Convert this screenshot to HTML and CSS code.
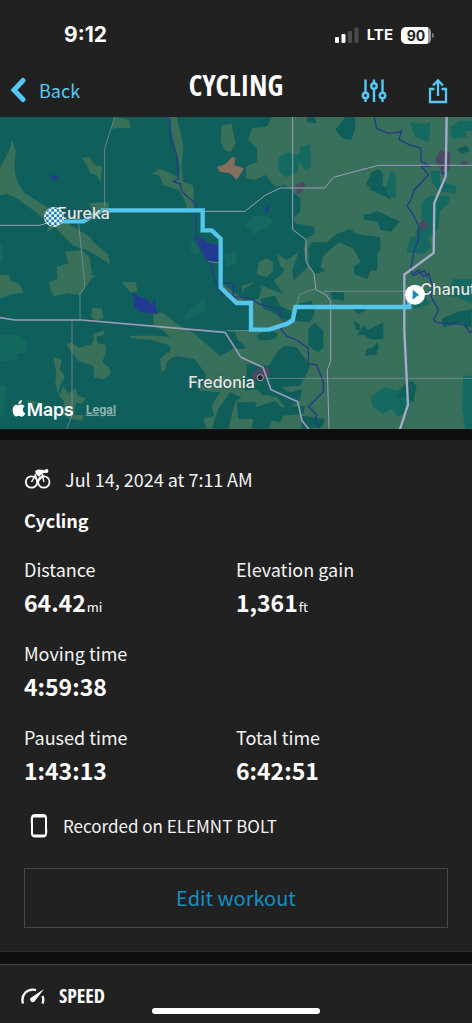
FILE: index.html
```html
<!DOCTYPE html>
<html lang="en">
<head>
<meta charset="utf-8">
<meta name="viewport" content="width=device-width, initial-scale=1">
<title>Cycling</title>
<link rel="stylesheet" href="styles.css">
</head>
<body>
<header class="top">
  <div class="status">
    <span class="clock">9:12</span>
    <div class="signals">
      <svg class="bars" viewBox="0 0 24 16" aria-hidden="true">
        <rect x="0" y="10" width="4" height="6" rx="1.3" fill="#fff"/>
        <rect x="6.500" y="7" width="4" height="9" rx="1.3" fill="#fff"/>
        <rect x="13" y="4" width="4" height="12" rx="1.3" fill="#4b4b4b"/>
        <rect x="19.500" y="0.500" width="4" height="15.500" rx="1.3" fill="#4b4b4b"/>
      </svg>
      <span class="network">LTE</span>
      <span class="battery"><span class="level">90</span></span>
    </div>
  </div>
  <nav class="nav">
    <button class="back" type="button">
      <svg class="chevron" viewBox="0 0 16 26" aria-hidden="true"><path d="M13 3.500 4 13l9 9.500" fill="none" stroke="#56c8f3" stroke-width="5" stroke-linecap="round" stroke-linejoin="miter"/></svg>
      Back
    </button>
    <h1 class="title">CYCLING</h1>
    <div class="actions">
      <button class="action" type="button" aria-label="Adjust">
        <svg class="icon" viewBox="0 0 26 26" fill="none" stroke="#56c8f3" stroke-width="2.400"><path d="M4.500 1.500v13M4.500 20.500v3.500M13 1.500v4M13 11v13M21.500 1.500v13M21.500 20.500v3.500"/><circle cx="4.500" cy="17.500" r="2.700"/><circle cx="13" cy="8" r="2.700"/><circle cx="21.500" cy="17.500" r="2.700"/></svg>
      </button>
      <button class="action" type="button" aria-label="Share">
        <svg class="icon" viewBox="0 0 26 26" fill="none" stroke="#56c8f3" stroke-width="2.300"><path d="M9.500 11H5v13h16V11h-4.500M13 18V2.500M8 7.500l5-5 5 5"/></svg>
      </button>
    </div>
  </nav>
</header>

<main>
<section class="map" aria-label="Route map">
<svg class="chart" viewBox="0 0 1416 936" preserveAspectRatio="xMidYMid slice">
  <defs>
    <pattern id="check" width="16" height="16" patternUnits="userSpaceOnUse" x="130" y="268"><path d="M0 0h8v8H0zM8 8h8v8H8z" fill="#1583b5"/></pattern>
  </defs>
  <rect width="1416" height="936" fill="#0f5f5d"/>

  <!-- western patches -->
  <g fill="#397059" transform="translate(0 -6)">
    <path d="M28 105l9-32 10 35-4 50 4 30 18 35 10 12 35 22 30 18 20 22 10 12 30 12 30 20 40 25 10 15 45 38 5 28-25-15-40-25-45-15-30-30-25-25-25 15 8-25-40-35-55-40-30-15-25 4-20-35-12-25 25-5z"/>
    <path d="M345 6l42 8 5 25-35 0-22 2zM245 130l20-5 20 25 22 5-5 45-12-20-20-5-12-30zM505 6l25 0 20 85-5 60 5 50 30 10 2 75-20 0-10-35-15-25-45-15-15-30-22-5 25-15 35 15 15 10 10-15-5-40-15-55zM665 30l30-4 12 60-15 25-20-5-10-30zM265 265l60-5 5 35-45 5zM195 410l50-5 25 25 5 40-10 35-25 35-35-5-50 10 20-25-5-65 35-10z"/>
    <path fill="#866e5d" d="M652 155l25-8 20-22 10 5-5 20 30 10-22 35-20-20-32-5z"/>
  </g>
  <g fill="#397059" transform="translate(0 459)">
    <path d="M0 15l25 0 12 20 20 5 15 28-35 5-37 12zM175 5l75-5 10 15 25 0-25 28-25 5-15 18-40-5-25 10-8-35 30-12zM365 35l42 2 5 25-20 6zM275 115l30 0 5 30-20 8-15-10zM285 190l30-10-5 15-20 5 2 20 25 5 0 25-10 25 20 18 5 20-22 15-28-5-2-35-45-15-15-20-22-30 15-5 25 15 35-10 10-15-5-15zM160 260l25 10-5 30 15 20-15 25-5 30-9-35 3-30zM190 350l15 20 22-15 5 20 25 10-10 15-20 0-5 35 30 0-5 17-45-7-15-15 5-35-15-20zM80 390l30 5-5 12-20-5z"/>
    <path d="M460 130l30-2 35 30 55 30 80 70 30-15 30 0 0 110-70-15-40-35-25-35-55-10-15 5-15 15-5 20-10 10-5-40 20-20 35-5-20-15-60-18-60-5-5-8 80 0 40 5-20-20-30-15z"/>
  </g>
  <g fill="#14695f">
    <path d="M0 370l10 20 0 40-10 5zM0 655l45-3 35 15-2 40-25 2-5 20-48 5zM0 805l18 5-8 90-10 0zM555 600l20-30 42-25 0 35-40 20-20 10zM570 385l20-12 12 30-12 10-18-8z"/>
  </g>

  <!-- eastern grassland -->
  <g transform="translate(510 216)">
    <path fill="#39705b" d="M306-216L291-187 246-182 234-147 261-122V-82L228-67V-32L256-27 286-42 316-7 346-12 391 28V68L371 88 376 103 431 113 436 133 411 148 400 180 412 235 370 275 368 240 385 190 350 213 320 195 330 230 345 243 325 265 312 275 340 315 300 300 250 280 215 290 220 330 160 285 150 300 165 320 200 345 250 348 245 420 170 430 225 470 225 480 190 478 150 510 120 500 90 460 20 458 0 470 0 490 60 500 105 535 110 600 60 560 80 590 90 605 150 610 125 650 132 680 100 690 110 720H906V-216z"/>
    <path fill="#39705b" d="M265 220l25-12 20 12 0 25-20 20-30-10z"/>
    <g fill="#0f5e5a">
      <path d="M220 300l45-25 10 25-10 30-45 5zM270 330l45-10 15 30 50 25-30 20-50-30-20-5zM260 440l35-20 30 15-10 15-45 5zM150 430l45 0 10 30-25 15-25-15zM385 345l40-10 10 35-15 30-45-5z"/>
      <path d="M415 180l10-20 45 0 30-25 40-15 20 15 70 10 2 35-10 15 0 50-20 0-10 25-40-15 0-25 20-10-20-40-45-20-30 25-20 20-5 30 15 10-30 10-20-25z"/>
      <path d="M230 540l0-15 65 5 30-45 20-15 35 5 40 55-5 15-25 45-60 5-20 15-30 10-20-20-35 5-10-35 15-10zM415 420l20-20 25 25 0 50-15 15-30-20zM482 310l40 0 0 25-35-5zM545 358l20-5 25 10-25 12zM550 395l20 10 0 20-12-3zM560 440l20-30 15 12 45-22 0 50-35 2-25-15zM585 500l5-20 20-5 12-15 5 15-8 22zM595 0l40-10 30 10-2 30-35-15zM580 75l20 0 20-10 70 33-28 30-30-5-10-25-40-5z"/>
      <path d="M200 640l60 0-5 15 60-20 20 20 70-5-5 25-60 5-10 20-25-5-10 25-50 0 5-30-45 0zM90 640l25 0-5 45-22-5zM180 610l35 15-20 15-20 80-50 0 20-60zM280 570l45 20 35 20 35-10-5 35-40 25-30-35-40-10zM395 680l70 10-10 25-60 5z"/>
      <path d="M526-216l30 0 0 35-14 35-26-7-20-25zM588-15l18-35 20-10 14 15-4 50-18 5zM410-216l25 0 5 20-30-5z"/>
    </g>
    <g fill="#146a60">
      <path d="M390-125l30-10 4 65-15 15-25-30zM648-5l15-50 15 10 0 70-25-5zM720-200l45 5 15-5 0 30-5 28-40-15zM325-95l25-15 40 10-8 50-35 15-22-20zM755 40l25-20 60 0-5 25-25 20-5 55-35 30-25 10-10-30 20-30zM780-55l30 0 0 35 50 10-5 25-50-10-20-25zM720 145l50-10 15 40-25 20-50-5zM710 320l45-10 25 35-45 15zM225 110l25-30 40 0 20 15-20 20-40 20zM60 160l30-15 5 35-20 15zM160 195l40-5 0 30-30 15zM840-185l30-20 36 0 0 30-20 0 5 20-45 5zM850 270l55 0 0 75-40-20-35-5zM880 560l26 0 0 160-20 0-10-60z"/>
      <path d="M602 625l40-30 40 10 40-30 15 15-25 80-30 15-15-25-30 15-30-25z"/>
    </g>
    <path fill="#0f5e5a" d="M815 390l45-20 45-10 0 55-20 0-5-15-60 15zM700 590l25-15 15 15-10 50-30-20-20 10zM860-120l30-10 10 15-25 10z"/>
    <path fill="#4b4a63" d="M376-12l22-10 8 10-8 20-18 8zM795-90l15-25 30 5 0 50-25 10zM750 100l10-8 15 15-5 15-18 0zM245 555l15-15 35-5 5 20-25 20-25-3zM870-80l20-5 4 10-14 5z"/>
    <path fill="#223b91" d="M283 60l12-15 4 8-8 17zM812-50l15 0 0 8-12-3zM80 148l20 0 10 12 40 10-4 50-35-5-15-25z"/>
  </g>
  <path fill="#223b91" d="M145 172l15 5 15-2-10 18zM395 525l15 12 30 10 15 15 10-20 0 25 8 25-30-5-25-2-18-20 5-10z"/>

  <!-- rivers -->
  <g fill="none" stroke="#263b86" stroke-width="4">
    <path d="M510 0l2 70 18 45 5 70-15 10 20 5 7 25 40 35 0 75 3 15-5 20 15 20 30 40 15 60 25 50M700 500v30"/>
    <g transform="translate(510 216)"><path d="M160 283h30v40l50 5 30 18 60 15 0-5 0 28 20 20-18 15 18 22 30 12 35 25 0 45 25 5 20 50 0 30-45 45 25 25-5 15 15 25"/></g>
    <g transform="translate(696 -6)"><path d="M426 6l8 34 35 15 35-4 5-5-8 28 30 15 35 10 2 40 25 15-25 0 22 25-43 45-10 30-12 18 20 30 15 30 0 40-15 40-8 45 5 25 35-15 10 20"/></g>
    <g transform="translate(696 459)"><path d="M545 10l15-10 15 20 15-10 12 40-5 30 23 40-15 30 10 8 80 5 20 25 15-15 0 30"/></g>
  </g>

  <!-- roads -->
  <g fill="none" stroke="#8897a0" stroke-width="2">
    <path d="M344 0l-30 95V270M236 320l18 180-1 12-13 18v76M216 611v285l-16 40M624 433l34 5M680 641l76 0M798 784h618M970 523h243M889 570l10-38 50-18"/>
  </g>
  <g fill="none" stroke="#9a9cbd" stroke-width="3">
    <path d="M0 325h120l30-10M600 283h135l60-48 46-22h133l26-32 135-36h281"/>
    <path d="M878 0v338l40 30v66l24 36 6 48 32 17 12 18v180l-10 25 5 178"/>
    <path stroke-width="5" d="M0 602l45 7h200l230 20 200 17 48 75 66 30 24 67 80 36 13 57 20 25"/>
    <path stroke="#a5adcc" stroke-width="7" d="M1340 0l-3 178-34 80-2 150-88 65v170l11 220-24 74"/>
  </g>

  <circle cx="781" cy="782" r="9" fill="#161b21" stroke="#a5a9b3" stroke-width="3"/>
  <path fill="none" stroke="#54c6eb" stroke-width="13" stroke-linejoin="miter" d="M165 313h85l55-33h303v60h27l27 25v147l48 46h43v80h54l55-18 16-10 8-40h342v-36"/>
  <g class="place">
    <text x="172" y="306">Eureka</text>
    <text x="565" y="813">Fredonia</text>
    <text x="1261" y="535">Chanute</text>
  </g>
  <circle cx="162" cy="300" r="30" fill="#fff"/>
  <circle cx="162" cy="300" r="29" fill="url(#check)"/>
  <circle cx="1245" cy="533" r="30" fill="#fff"/>
  <path d="M1238 518l19 15-19 15z" fill="#168bc0"/>
  <path fill="#fff" d="M56 865c6-4 14-4 18 3-8 5-7 17 2 21-4 9-9 12-15 9-4-2-6-2-10 0-7 3-13-7-13-18 0-14 10-20 18-15zM55 862c0-8 4-12 11-13 0 8-4 12-11 13z"/>
  <text class="brand" x="80" y="896">Maps</text>
  <a href="#legal"><text class="legal" x="258" y="890">Legal</text></a>
</svg>
</section>

<section class="summary">
  <div class="date">
    <svg class="bike" viewBox="0 0 28 20" aria-hidden="true" fill="none" stroke="#fff" stroke-width="1.800"><circle cx="7.500" cy="13" r="5.700"/><circle cx="19.800" cy="13" r="5.700"/><path d="M7.500 13l4-7M11 5l2.500 8 6-7M18 5l2 8" stroke-width="1.500"/><path d="M11 2l3-1.500 6 .5 3 2.500-5 1-3 3.500-3-3z" fill="#fff" stroke="none"/><circle cx="22.500" cy="2" r="1.900" fill="#fff" stroke="none"/></svg>
    <time datetime="2024-07-14T07:11">Jul 14, 2024 at 7:11&#8201;AM</time>
  </div>
  <h2 class="name">Cycling</h2>
  <dl class="stats">
    <div class="stat"><dt>Distance</dt><dd>64.42<small>mi</small></dd></div>
    <div class="stat"><dt>Elevation gain</dt><dd>1,361<small>ft</small></dd></div>
    <div class="stat wide"><dt>Moving time</dt><dd>4:59:38</dd></div>
    <div class="stat"><dt>Paused time</dt><dd>1:43:13</dd></div>
    <div class="stat"><dt>Total time</dt><dd>6:42:51</dd></div>
  </dl>
  <div class="device">
    <svg class="unit" viewBox="0 0 18 26" aria-hidden="true" fill="none" stroke="#fff"><rect x="2" y="2" width="14" height="21.500" rx="3" stroke-width="2"/><path d="M3 3.500h12M3 22.500h12" stroke-width="2"/><path d="M1.500 5v5M16.500 16v4" stroke-width="1.500"/></svg>
    Recorded on ELEMNT BOLT
  </div>
  <button class="edit" type="button">Edit workout</button>
</section>

<section class="speed">
  <svg class="gauge" viewBox="0 0 24 18" aria-hidden="true"><path d="M2 16.500C-.5 8 6 1 15 3" fill="none" stroke="#fff" stroke-width="2.300"/><path d="M21.500 9q1.500 4 0 7.500" fill="none" stroke="#fff" stroke-width="2.300"/><path d="M23 2L13.500 14.500a2.700 2.700 0 0 1-4-3.500z" fill="#fff"/></svg>
  <h2 class="heading">SPEED</h2>
</section>
</main>
<div class="home"></div>
</body>
</html>
```
FILE: styles.css
```css
* { box-sizing: border-box; }

body {
  margin: 0;
  min-height: 100vh;
  position: relative;
  background: #212121;
  color: #f4f4f4;
  font-family: "Noto Sans CJK SC", "Noto Sans", sans-serif;
  font-size: 18px;
  line-height: 28px;
}

h1, h2, dl, dd { margin: 0; }

button {
  border: 0;
  padding: 0;
  background: none;
  font: inherit;
  cursor: pointer;
}

svg { display: block; }

.status {
  display: flex;
  justify-content: space-between;
  align-items: center;
  height: 70px;
  padding: 0 38px 0 64px;
  font-family: Inter, "Liberation Sans", sans-serif;
  color: #fff;
}

.clock { font-size: 21px; font-weight: 700; }

.signals { display: flex; align-items: center; gap: 8px; }
.bars { width: 24px; height: 16px; }
.network { font-size: 15px; font-weight: 700; }

.battery { display: flex; align-items: center; }
.battery::after {
  content: "";
  width: 2px;
  height: 5px;
  margin-left: 1px;
  border-radius: 0 2px 2px 0;
  background: #777;
}
.level {
  width: 30px;
  border-radius: 5px;
  background: linear-gradient(90deg, #fff 90%, #999 90%);
  color: #212121;
  font-size: 14px;
  font-weight: 700;
  line-height: 17px;
  text-align: center;
}

.nav {
  display: grid;
  grid-template-columns: 1fr auto 1fr;
  align-items: start;
  height: 47px;
  padding: 0 10px;
}

.back {
  display: flex;
  align-items: center;
  gap: 13px;
  padding-top: 6px;
  color: #56c8f3;
  font-size: 18px;
  line-height: 28px;
}
.chevron { width: 16px; height: 26px; }

.title {
  font-family: "Liberation Sans Narrow", "Open Sans Condensed", "Roboto Condensed", "DejaVu Sans Condensed", sans-serif;
  font-size: 29px;
  font-weight: 700;
  line-height: 30px;
  color: #fff;
}

.actions { display: flex; justify-content: flex-end; gap: 38px; padding: 8px 11px 0 0; }
.icon { width: 26px; height: 26px; }

.map { border-bottom: 11px solid #0e0e0e; }
.chart { width: 100%; height: auto; }

.place {
  fill: #e1e9e9;
  stroke: #31524f;
  stroke-width: 3px;
  paint-order: stroke;
  font-family: Inter, "Liberation Sans", sans-serif;
  font-size: 48px;
  font-weight: 500;
}
.brand {
  fill: #fff;
  font-family: Inter, "Liberation Sans", sans-serif;
  font-size: 53px;
  font-weight: 600;
}
.legal {
  fill: #91b5b1;
  font-family: Inter, "Liberation Sans", sans-serif;
  font-size: 34px;
  font-weight: 700;
  text-decoration: underline;
}

.summary {
  padding: 25px 24px 23px;
  border-bottom: 1px solid #2c2c2c;
}

.date { display: flex; align-items: center; gap: 13px; }
.bike { width: 28px; height: 20px; }

.name {
  margin: 13px 0 20px;
  font-size: 18px;
  font-weight: 700;
  line-height: 28px;
  color: #fff;
}

.stats {
  display: grid;
  grid-template-columns: 1fr 1fr;
  row-gap: 18px;
}
.wide { grid-column: 1 / -1; }
.stat dt { line-height: 30px; }
.stat dd {
  color: #fff;
  font-size: 23px;
  font-weight: 700;
  line-height: 36px;
}
.stat small {
  margin-left: 1px;
  font-size: 13px;
  font-weight: 400;
  line-height: 1;
}

.device {
  display: flex;
  align-items: center;
  gap: 15px;
  margin: 24px 0 28px;
  padding-left: 6px;
  font-size: 17px;
}
.unit { width: 18px; height: 26px; }

.edit {
  width: 100%;
  border: 1px solid #484848;
  color: #168fc2;
  font-size: 20px;
  line-height: 58px;
}

.speed {
  display: flex;
  align-items: center;
  gap: 14px;
  padding: 16px 21px 12px;
  border-top: 1px solid #444;
  box-shadow: 0 -12px #0e0e0e;
  margin-top: 12px;
}
.gauge { width: 24px; height: 18px; }
.heading {
  font-family: "Liberation Sans Narrow", "Open Sans Condensed", "Roboto Condensed", "DejaVu Sans Condensed", sans-serif;
  font-size: 20px;
  font-weight: 700;
  line-height: 30px;
  color: #fff;
}

.home {
  position: fixed;
  left: 50%;
  bottom: 9px;
  width: 168px;
  height: 6px;
  margin-left: -84px;
  border-radius: 3px;
  background: #fff;
}
```
